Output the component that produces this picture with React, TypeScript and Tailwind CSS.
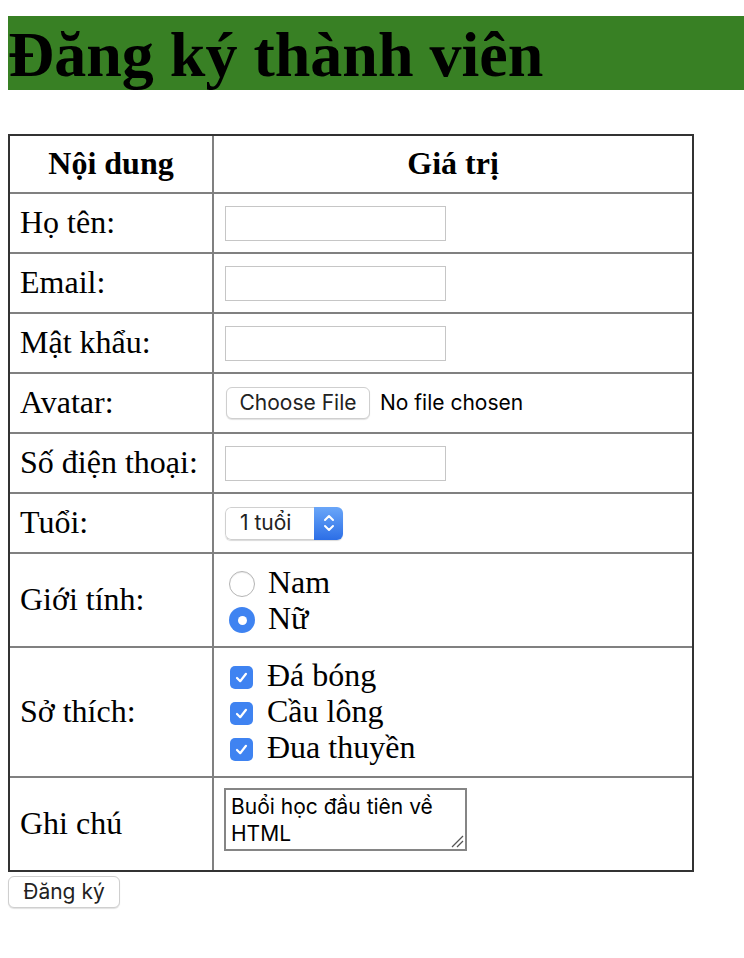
import React from "react";

const serif = { fontFamily: '"Liberation Serif", "Times New Roman", serif' };

function TextBox() {
  return <div className="w-[221px] h-[35px] border border-[#c6c6c6] bg-white" />;
}

function Radio({ checked }: { checked?: boolean }) {
  if (checked) {
    return (
      <span className="w-[26px] h-[26px] rounded-full bg-[#3f83f1] flex items-center justify-center shrink-0">
        <span className="w-[9px] h-[9px] rounded-full bg-white" />
      </span>
    );
  }
  return <span className="w-[26px] h-[26px] rounded-full border border-[#b5b5b5] bg-white shrink-0 shadow-[inset_0_1px_1px_rgba(0,0,0,0.08)]" />;
}

function Check() {
  return (
    <span className="w-[23px] h-[23px] rounded-[5px] bg-[#3f83f1] flex items-center justify-center shrink-0">
      <svg width="15" height="15" viewBox="0 0 15 15" fill="none">
        <path d="M3 8 L6.2 11.2 L12 3.8" stroke="white" strokeWidth="2.2" strokeLinecap="round" strokeLinejoin="round" />
      </svg>
    </span>
  );
}

export default function App() {
  const sans = { fontFamily: 'Inter, "Liberation Sans", Arial, sans-serif' };
  const cell = "border-2 border-[#808080] p-0 align-middle";
  return (
    <div className="bg-white min-h-[958px] w-[744px] overflow-hidden text-black" style={serif}>
      <div className="pt-[16px] pl-2">
        <h1 className="bg-[#388024] h-[74px] text-[64px] leading-[78px] font-bold whitespace-nowrap overflow-hidden">
          Đăng ký thành viên
        </h1>
      </div>
      <div className="ml-2 mt-[44px] w-[686px] border-2 border-[#333333]">
        <table className="w-full border-collapse border-hidden text-[32px] table-fixed">
          <colgroup>
            <col className="w-[203px]" />
            <col />
          </colgroup>
          <tbody>
            <tr>
              <th className={cell}>
                <div className="h-[56px] flex items-center justify-center font-bold pb-[2px]">Nội dung</div>
              </th>
              <th className={cell}>
                <div className="h-[56px] flex items-center justify-center font-bold pb-[2px]">Giá trị</div>
              </th>
            </tr>
            {["Họ tên:", "Email:", "Mật khẩu:"].map((l) => (
              <tr key={l}>
                <td className={cell}>
                  <div className="h-[58px] flex items-center pl-[10px] pb-[3px]">{l}</div>
                </td>
                <td className={cell}>
                  <div className="h-[58px] flex items-center pl-[11px]">
                    <TextBox />
                  </div>
                </td>
              </tr>
            ))}
            <tr>
              <td className={cell}>
                <div className="h-[58px] flex items-center pl-[10px] pb-[3px]">Avatar:</div>
              </td>
              <td className={cell}>
                <div className="h-[58px] flex items-center pl-[12px] text-[21px]" style={sans}>
                  <span className="w-[144px] h-[32px] rounded-[6px] border border-[#cfcfcf] bg-white shadow-[0_1px_1px_rgba(0,0,0,0.12)] flex items-center justify-center text-[#222]">
                    Choose File
                  </span>
                  <span className="ml-[10px]">No file chosen</span>
                </div>
              </td>
            </tr>
            <tr>
              <td className={cell}>
                <div className="h-[58px] flex items-center pl-[10px] pb-[3px]">Số điện thoại:</div>
              </td>
              <td className={cell}>
                <div className="h-[58px] flex items-center pl-[11px]">
                  <TextBox />
                </div>
              </td>
            </tr>
            <tr>
              <td className={cell}>
                <div className="h-[58px] flex items-center pl-[10px] pb-[3px]">Tuổi:</div>
              </td>
              <td className={cell}>
                <div className="h-[58px] flex items-center pl-[11px]">
                  <div className="w-[118px] h-[33px] flex rounded-[6px] shadow-[0_1px_1px_rgba(0,0,0,0.15)] overflow-hidden">
                    <div
                      className="flex-1 border border-r-0 border-[#d0d0d0] rounded-l-[6px] bg-white flex items-center pl-[14px] text-[21px] text-[#222]"
                      style={sans}
                    >
                      1 tuổi
                    </div>
                    <div className="w-[29px] bg-gradient-to-b from-[#6aa6f8] to-[#2c6ee6] flex items-center justify-center">
                      <svg width="14" height="22" viewBox="0 0 14 22" fill="none">
                        <path d="M3 8 L7 4 L11 8" stroke="white" strokeWidth="2" strokeLinecap="round" strokeLinejoin="round" />
                        <path d="M3 14 L7 18 L11 14" stroke="white" strokeWidth="2" strokeLinecap="round" strokeLinejoin="round" />
                      </svg>
                    </div>
                  </div>
                </div>
              </td>
            </tr>
            <tr>
              <td className={cell}>
                <div className="h-[92px] flex items-center pl-[10px] pb-[3px]">Giới tính:</div>
              </td>
              <td className={cell}>
                <div className="h-[92px] flex flex-col justify-center pl-[15px] pt-[4px]">
                  <div className="h-[36px] flex items-center gap-[13px]">
                    <Radio />
                    <span className="pb-[4px]">Nam</span>
                  </div>
                  <div className="h-[36px] flex items-center gap-[13px]">
                    <Radio checked />
                    <span className="pb-[4px]">Nữ</span>
                  </div>
                </div>
              </td>
            </tr>
            <tr>
              <td className={cell}>
                <div className="h-[128px] flex items-center pl-[10px] pb-[3px]">Sở thích:</div>
              </td>
              <td className={cell}>
                <div className="h-[128px] flex flex-col justify-center pl-[16px] pt-[2px]">
                  {["Đá bóng", "Cầu lông", "Đua thuyền"].map((h) => (
                    <div key={h} className="h-[36px] flex items-center gap-[14px]">
                      <Check />
                      <span className="pb-[4px]">{h}</span>
                    </div>
                  ))}
                </div>
              </td>
            </tr>
            <tr>
              <td className={cell}>
                <div className="h-[92px] flex items-center pl-[10px] pb-[3px]">Ghi chú</div>
              </td>
              <td className={cell}>
                <div className="h-[92px] pl-[10px] pt-[10px]">
                  <div
                    className="relative w-[243px] h-[63px] border-2 border-[#858585] bg-white px-[5px] pt-[3px] text-[21px] leading-[27px] text-black"
                    style={sans}
                  >
                    Buổi học đầu tiên về
                    <br />
                    HTML
                    <svg className="absolute right-[1px] bottom-[1px]" width="14" height="14" viewBox="0 0 14 14">
                      <path d="M2 13 L13 2" stroke="#555" strokeWidth="1.2" />
                      <path d="M7 13 L13 7" stroke="#555" strokeWidth="1.2" />
                    </svg>
                  </div>
                </div>
              </td>
            </tr>
          </tbody>
        </table>
      </div>
      <div className="ml-2 mt-[4px]">
        <div
          className="w-[112px] h-[32px] rounded-[6px] border border-[#cfcfcf] bg-white shadow-[0_1px_1px_rgba(0,0,0,0.12)] flex items-center justify-center text-[21px] text-[#222]"
          style={sans}
        >
          Đăng ký
        </div>
      </div>
    </div>
  );
}
